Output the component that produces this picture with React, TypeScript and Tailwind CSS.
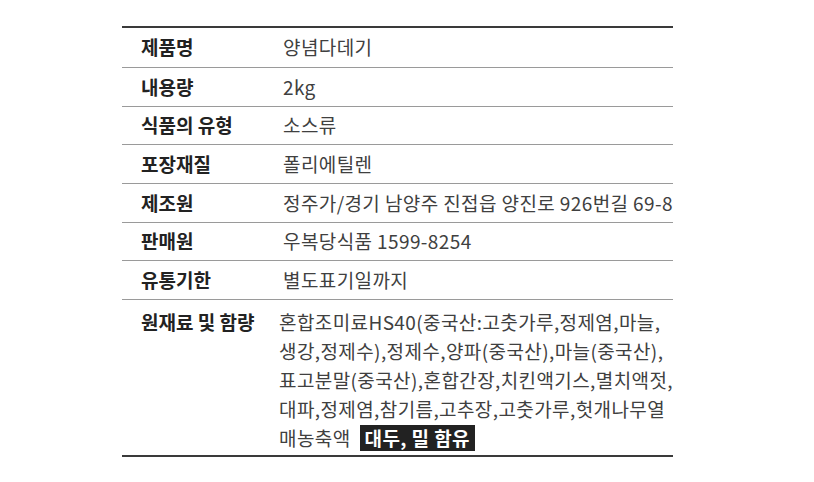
import React from 'react';

const rows: { label: string; value: string }[] = [
  { label: '제품명', value: '양념다데기' },
  { label: '내용량', value: '2kg' },
  { label: '식품의 유형', value: '소스류' },
  { label: '포장재질', value: '폴리에틸렌' },
  { label: '제조원', value: '정주가/경기 남양주 진접읍 양진로 926번길 69-8' },
  { label: '판매원', value: '우복당식품 1599-8254' },
  { label: '유통기한', value: '별도표기일까지' },
];

const ingredientLines = [
  '혼합조미료HS40(중국산:고춧가루,정제염,마늘,',
  '생강,정제수),정제수,양파(중국산),마늘(중국산),',
  '표고분말(중국산),혼합간장,치킨액기스,멸치액젓,',
  '대파,정제염,참기름,고추장,고춧가루,헛개나무열',
];

export default function App() {
  return (
    <div
      className="w-[814px] h-[482px] bg-white pt-[26px] pl-[122px]"
      style={{ fontFamily: '"Noto Sans CJK KR", "Noto Sans", sans-serif' }}
    >
      <div className="w-[551px] border-t-2 border-b-[2px] border-[#3a3a3a]">
        {rows.map((row, i) => (
          <div
            key={row.label}
            className={`flex items-center border-b border-[#9a9a9a] ${i === 0 ? 'h-[40px]' : 'h-[38.7px]'}`}
          >
            <div className="w-[161px] pl-[19px] text-[19px] font-bold text-[#222]">{row.label}</div>
            <div className="text-[19px] tracking-[0.4px] text-[#404040] whitespace-nowrap">{row.value}</div>
          </div>
        ))}

        {/* 원재료 */}
        <div className="flex pt-[7px] pb-[3px]">
          <div className="w-[161px] pl-[19px] text-[19px] leading-[29px] font-bold text-[#222]">원재료 및 함량</div>
          <div className="text-[19px] leading-[29px] text-[#404040] tracking-[0.4px]">
            {ingredientLines.map((line) => (
              <div key={line} className="whitespace-nowrap">{line}</div>
            ))}
            <div className="flex items-center whitespace-nowrap">
              <span>매농축액</span>
              <span className="ml-[9px] px-[5px] h-[26px] flex items-center bg-[#222] text-white font-bold">
                대두, 밀 함유
              </span>
            </div>
          </div>
        </div>
      </div>
    </div>
  );
}
